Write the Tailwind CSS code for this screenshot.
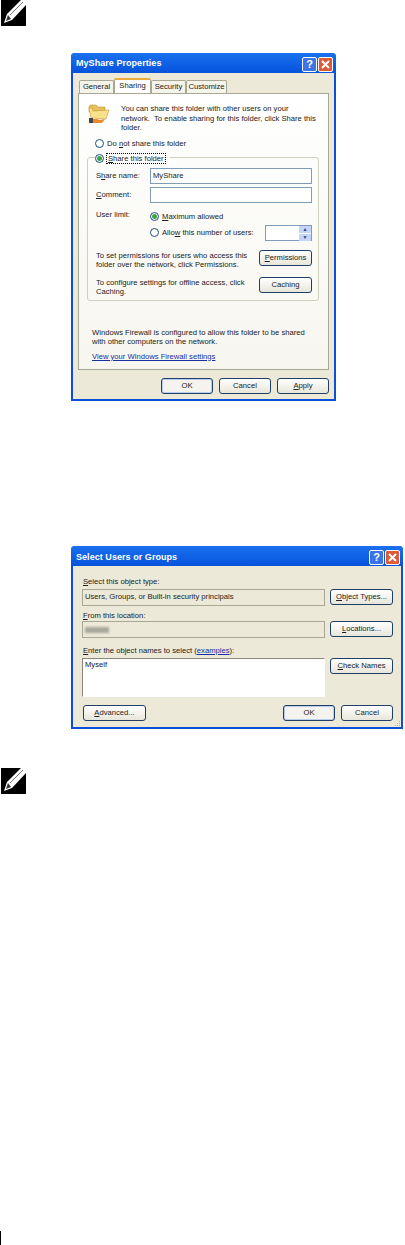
<!DOCTYPE html>
<html lang="en">
<head>
  <meta charset="UTF-8">
  <title>MyShare Properties</title>
  <script src="https://cdn.jsdelivr.net/npm/@tailwindcss/browser@4"></script>
</head>
<body class="bg-white font-['Liberation_Sans',sans-serif] text-[7.65px] leading-[9.5px] text-[#222]">
<div class="w-[405px] h-[1245px] overflow-hidden flex flex-col">

  <!-- note icon -->
  <svg class="ml-px w-[25px] h-[26px] shrink-0 bg-black" viewBox="0 0 25 26"><path d="M3 23 6 14 20 0h5v5L11 20Z" fill="#fff"/><path d="M9 15 22 2" stroke="#777" stroke-width="1"/><path d="M7 15l3 4-5 2Z" fill="#333"/></svg>

  <!-- MyShare Properties -->
  <div class="ml-[71px] mt-[27px] w-[265px] h-[348px] shrink-0 rounded-t-[4px] bg-[#0a50d8] flex flex-col">
    <div class="h-[20px] pl-[5px] pr-[3px] flex items-center justify-between bg-gradient-to-b from-[#1a70ee] to-[#0653dc] rounded-t-[4px]">
      <span class="mt-[2px] text-[9px] font-bold text-white tracking-[.05px]">MyShare Properties</span>
      <div class="mt-[3px] flex gap-px">
        <span class="w-[15px] h-[15px] rounded-[2px] border border-white bg-[#3c74e8] text-white font-bold text-[11px] leading-[13px] text-center">?</span>
        <span class="w-[15px] h-[15px] rounded-[2px] border border-white bg-[#dc5a35]"><svg class="w-[13px] h-[13px]" viewBox="0 0 13 13"><path d="M3 3l7 7M10 3l-7 7" stroke="#fff" stroke-width="2"/></svg></span>
      </div>
    </div>
    <div class="mx-[2px] mb-[2px] flex-1 bg-[#ece9d8] pt-[5px] px-[5px] flex flex-col">
      <!-- tabs -->
      <div class="flex items-end h-[15px] pl-[1px] relative z-10">
        <span class="w-[35px] h-[13px] text-center border border-[#a9a895] border-b-0 bg-[#f5f4ea] rounded-t-[2px] leading-[12px]">General</span>
        <span class="w-[37px] h-[15px] text-center border border-[#a9a895] border-t-2 border-t-[#eda93b] border-b-0 bg-white rounded-t-[2px] leading-[12px]">Sharing</span>
        <span class="w-[35px] h-[13px] text-center border border-[#a9a895] border-b-0 bg-[#f5f4ea] rounded-t-[2px] leading-[12px]">Security</span>
        <span class="w-[41px] h-[13px] text-center border border-[#a9a895] border-b-0 bg-[#f5f4ea] rounded-t-[2px] leading-[12px]">Customize</span>
      </div>
      <div class="h-[277px] border border-[#a9a895] bg-gradient-to-b from-white to-[#f7f6ef] pl-[9px] pr-[9px] pt-[10px]">
        <div class="flex">
          <svg class="w-[22px] h-[20px] shrink-0" viewBox="0 0 22 20"><path d="M1 3 2 1h6l2 2h7v5H1Z" fill="#e8bf58" stroke="#b08a30" stroke-width=".5"/><path d="M3 14 1 4h3l1 3 16-1-3 9Z" fill="#fbe08a" stroke="#b08a30" stroke-width=".5"/><path d="M1 14h4v5H1Z" fill="#444"/><path d="M5 15h4l3 1 5-1-3 4H5Z" fill="#ea8a2a"/></svg>
          <p class="ml-[11px] w-[204px]">You can share this folder with other users on your network.&nbsp; To enable sharing for this folder, click Share this folder.</p>
        </div>

        <div class="mt-[6px] ml-[7px] flex items-center gap-[3px] h-[10px]">
          <span class="w-[9px] h-[9px] rounded-full border border-[#1c5180] bg-white"></span><span>Do <u>n</u>ot share this folder</span>
        </div>

        <!-- group box -->
        <div class="relative mt-[8px] -ml-px w-[232px] h-[144px] border border-[#d0d0bf] rounded-[3px] pl-[8px] pr-[6px] pt-[10px]">
          <div class="absolute left-[7px] -top-[5px] flex items-center gap-[2px] bg-white pr-[4px]">
            <span class="w-[9px] h-[9px] rounded-full border border-[#1c5180] bg-white flex items-center justify-center"><span class="w-[5px] h-[5px] rounded-full bg-[#3fa344]"></span></span>
            <span class="border border-dotted border-black px-px h-[11px] leading-[9px]"><u>S</u>hare this folder</span>
          </div>
          <div class="flex items-center h-[16px]">
            <span class="w-[54px]">S<u>h</u>are name:</span>
            <span class="w-[162px] h-[16px] border border-[#7f9db9] bg-white pl-[2px] leading-[14px]">MyShare</span>
          </div>
          <div class="mt-[3px] flex items-center h-[16px]">
            <span class="w-[54px]"><u>C</u>omment:</span>
            <span class="w-[162px] h-[16px] border border-[#7f9db9] bg-white"></span>
          </div>
          <div class="mt-[7px] flex">
            <span class="w-[54px]">User limit:</span>
            <div class="flex-1 flex flex-col">
              <div class="flex items-center gap-[3px] h-[10px] mt-[2px]">
                <span class="w-[9px] h-[9px] rounded-full border border-[#1c5180] bg-white flex items-center justify-center"><span class="w-[5px] h-[5px] rounded-full bg-[#3fa344]"></span></span><span><u>M</u>aximum allowed</span>
              </div>
              <div class="flex items-center justify-between h-[16px] mt-[3px]">
                <div class="flex items-center gap-[3px]">
                  <span class="w-[9px] h-[9px] rounded-full border border-[#1c5180] bg-white"></span><span>Allo<u>w</u> this number of users:</span>
                </div>
                <div class="w-[47px] h-[16px] border border-[#7f9db9] bg-white flex justify-end">
                  <div class="w-[12px] flex flex-col gap-px">
                    <span class="flex-1 bg-[#c5d5f8] text-[#24408a] text-[5px] leading-[7px] text-center">▲</span>
                    <span class="flex-1 bg-[#c5d5f8] text-[#24408a] text-[5px] leading-[7px] text-center">▼</span>
                  </div>
                </div>
              </div>
            </div>
          </div>
          <div class="mt-[9px] flex justify-between items-start">
            <p class="mt-px w-[155px]">To set permissions for users who access this folder over the network, click Permissions.</p>
            <span class="w-[53px] h-[16px] border border-[#1f3f66] rounded-[3px] bg-gradient-to-b from-white to-[#e8e6da] text-center leading-[14px]"><u>P</u>ermissions</span>
          </div>
          <div class="mt-[7px] flex justify-between items-start">
            <p class="mt-px w-[155px]">To configure settings for offline access, click Caching.</p>
            <span class="w-[53px] h-[16px] border border-[#1f3f66] rounded-[3px] bg-gradient-to-b from-white to-[#e8e6da] text-center leading-[14px]">Caching</span>
          </div>
        </div>

        <p class="mt-[27px] ml-[4px] w-[225px]">Windows Firewall is configured to allow this folder to be shared with other computers on the network.</p>
        <p class="mt-[5px] ml-[4px] text-[#1a2fa0] underline">View your Windows Firewall settings</p>
      </div>
      <div class="mt-[8px] flex justify-end gap-[6px]">
        <span class="w-[52px] h-[16px] border border-[#1f3f66] rounded-[3px] bg-[#f4f3ee] shadow-[inset_0_0_0_1px_#b8cdf0] text-center leading-[14px]">OK</span>
        <span class="w-[52px] h-[16px] border border-[#1f3f66] rounded-[3px] bg-gradient-to-b from-white to-[#e8e6da] text-center leading-[14px]">Cancel</span>
        <span class="w-[52px] h-[16px] border border-[#1f3f66] rounded-[3px] bg-gradient-to-b from-white to-[#e8e6da] text-center leading-[14px]"><u>A</u>pply</span>
      </div>
    </div>
  </div>

  <!-- Select Users or Groups -->
  <div class="ml-[71px] mt-[145px] w-[332px] h-[183px] shrink-0 rounded-t-[4px] bg-[#0a50d8] flex flex-col">
    <div class="h-[20px] pl-[5px] pr-[3px] flex items-center justify-between bg-gradient-to-b from-[#1a70ee] to-[#0653dc] rounded-t-[4px]">
      <span class="mt-[3px] text-[9px] font-bold text-white tracking-[.05px]">Select Users or Groups</span>
      <div class="mt-[3px] flex gap-px">
        <span class="w-[15px] h-[15px] rounded-[2px] border border-white bg-[#3c74e8] text-white font-bold text-[11px] leading-[13px] text-center">?</span>
        <span class="w-[15px] h-[15px] rounded-[2px] border border-white bg-[#dc5a35]"><svg class="w-[13px] h-[13px]" viewBox="0 0 13 13"><path d="M3 3l7 7M10 3l-7 7" stroke="#fff" stroke-width="2"/></svg></span>
      </div>
    </div>
    <div class="relative mx-[2px] mb-[2px] flex-1 bg-[#ece9d8] pl-[9px] pr-[8px] pt-[11px]">
      <p class="ml-px"><u>S</u>elect this object type:</p>
      <div class="mt-[2px] flex justify-between">
        <span class="w-[243px] h-[17px] border border-[#a9a895] pl-[2px] leading-[14px]">Users, Groups, or Built-in security principals</span>
        <span class="w-[63px] h-[16px] border border-[#1f3f66] rounded-[3px] bg-gradient-to-b from-white to-[#e8e6da] text-center leading-[14px]"><u>O</u>bject Types...</span>
      </div>
      <p class="mt-[5px] ml-px"><u>F</u>rom this location:</p>
      <div class="mt-px flex justify-between">
        <span class="w-[243px] h-[17px] border border-[#a9a895] pl-[2px] flex items-center"><span class="w-[24px] h-[6px] bg-[#a8a89c] blur-[1px]"></span></span>
        <span class="w-[63px] h-[16px] border border-[#1f3f66] rounded-[3px] bg-gradient-to-b from-white to-[#e8e6da] text-center leading-[14px]"><u>L</u>ocations...</span>
      </div>
      <p class="mt-[8px] ml-px"><u>E</u>nter the object names to select (<span class="text-[#1a2fa0] underline">examples</span>):</p>
      <div class="mt-[2px] flex justify-between">
        <span class="w-[243px] h-[39px] border border-[#8a8878] border-b-white border-r-white bg-white pl-[2px] pt-[1px]">Myself</span>
        <span class="w-[63px] h-[16px] border border-[#1f3f66] rounded-[3px] bg-gradient-to-b from-white to-[#e8e6da] text-center leading-[14px]"><u>C</u>heck Names</span>
      </div>
      <div class="mt-[8px] flex">
        <span class="ml-px w-[63px] h-[16px] border border-[#1f3f66] rounded-[3px] bg-gradient-to-b from-white to-[#e8e6da] text-center leading-[14px]"><u>A</u>dvanced...</span>
        <span class="ml-auto w-[52px] h-[16px] border border-[#1f3f66] rounded-[3px] bg-[#f4f3ee] shadow-[inset_0_0_0_1px_#b8cdf0] text-center leading-[14px]">OK</span>
        <span class="ml-[6px] w-[52px] h-[16px] border border-[#1f3f66] rounded-[3px] bg-gradient-to-b from-white to-[#e8e6da] text-center leading-[14px]">Cancel</span>
      </div>
      <!-- resize grip -->
      <svg class="absolute right-0 bottom-0 w-[7px] h-[7px]" viewBox="0 0 7 7"><path d="M5 1h1v1H5ZM3 3h1v1H3ZM5 3h1v1H5ZM1 5h1v1H1ZM3 5h1v1H3ZM5 5h1v1H5Z" fill="#b5b2a0"/></svg>
    </div>
  </div>

  <svg class="ml-px mt-[39px] w-[25px] h-[26px] shrink-0 bg-black" viewBox="0 0 25 26"><path d="M3 23 6 14 20 0h5v5L11 20Z" fill="#fff"/><path d="M9 15 22 2" stroke="#777" stroke-width="1"/><path d="M7 15l3 4-5 2Z" fill="#333"/></svg>

  <!-- page edge rule -->
  <div class="mt-auto w-[1px] h-[14px] bg-black shrink-0"></div>
</div>
</body>
</html>
